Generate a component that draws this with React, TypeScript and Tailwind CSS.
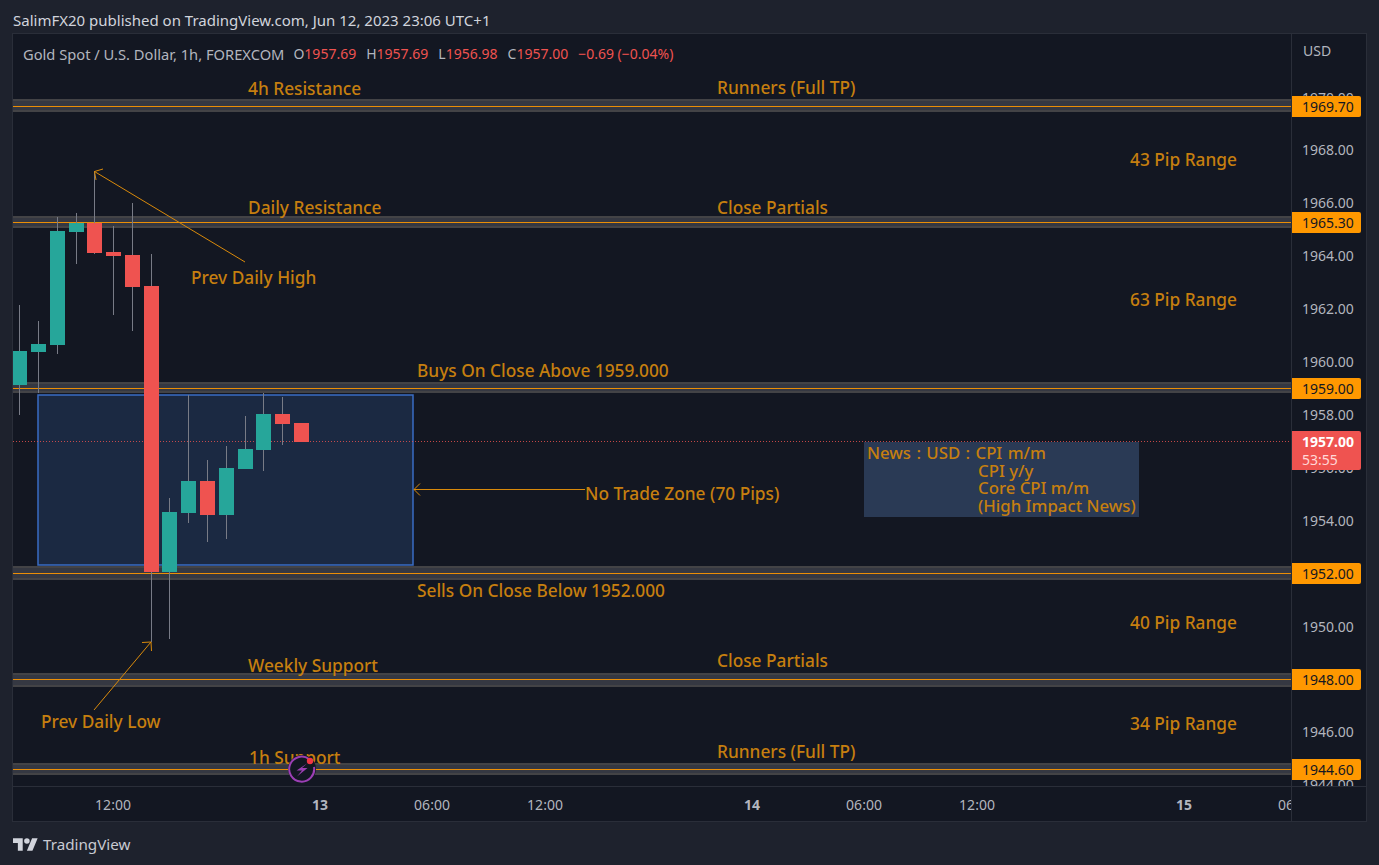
const font = "font-['Noto_Sans','Liberation_Sans',sans-serif]";

// [bodyLeft, bodyTop, bodyBottom, wickTop, wickBottom, up]
const candles: [number, number, number, number, number, boolean][] = [
  [12, 351, 385, 305, 415, true],
  [31, 344, 352, 321, 393, true],
  [50, 231, 345, 217, 354, true],
  [69, 223, 232, 213, 264, true],
  [87, 223, 253, 171, 254, false],
  [106, 252, 256, 226, 315, false],
  [125, 255, 287, 203, 331, false],
  [144, 286, 572, 254, 642, false],
  [162, 512, 572, 498, 639, true],
  [181, 481, 513, 395, 523, true],
  [200, 481, 515, 460, 542, false],
  [219, 468, 515, 446, 539, true],
  [238, 449, 469, 416, 469, true],
  [256, 414, 450, 393, 471, true],
  [275, 414, 424, 397, 445, false],
  [294, 423, 442, 423, 442, false],
];

const bands: [number, number, number][] = [
  [99, 112, 106],
  [216, 228, 222],
  [382, 393, 388],
  [566, 580, 573],
  [673, 687, 679],
  [763, 775, 769],
];

const labels = [
  { text: "4h Resistance", pos: "left-[235px] top-[44px]" },
  { text: "Runners (Full TP)", pos: "left-[704px] top-[43px]" },
  { text: "Daily Resistance", pos: "left-[235px] top-[163px]" },
  { text: "Close Partials", pos: "left-[704px] top-[163px]" },
  { text: "Prev Daily High", pos: "left-[178px] top-[233px]" },
  { text: "Buys On Close Above 1959.000", pos: "left-[404px] top-[326px]" },
  { text: "No Trade Zone (70 Pips)", pos: "left-[572px] top-[449px]" },
  { text: "Sells On Close Below 1952.000", pos: "left-[404px] top-[546px]" },
  { text: "Weekly Support", pos: "left-[235px] top-[621px]" },
  { text: "Close Partials", pos: "left-[704px] top-[616px]" },
  { text: "Prev Daily Low", pos: "left-[28px] top-[677px]" },
  { text: "1h Support", pos: "left-[236px] top-[713px]" },
  { text: "Runners (Full TP)", pos: "left-[704px] top-[707px]" },
  { text: "43 Pip Range", pos: "left-[1117px] top-[115px]" },
  { text: "63 Pip Range", pos: "left-[1117px] top-[255px]" },
  { text: "40 Pip Range", pos: "left-[1117px] top-[578px]" },
  { text: "34 Pip Range", pos: "left-[1117px] top-[679px]" },
];

const priceTicks = [
  { text: "1970.00", pos: "top-[54px]" },
  { text: "1968.00", pos: "top-[106px]" },
  { text: "1966.00", pos: "top-[159px]" },
  { text: "1964.00", pos: "top-[212px]" },
  { text: "1962.00", pos: "top-[265px]" },
  { text: "1960.00", pos: "top-[318px]" },
  { text: "1958.00", pos: "top-[371px]" },
  { text: "1956.00", pos: "top-[424px]" },
  { text: "1954.00", pos: "top-[477px]" },
  { text: "1950.00", pos: "top-[583px]" },
  { text: "1946.00", pos: "top-[688px]" },
  { text: "1944.00", pos: "top-[741px]" },
];

const priceTags = [
  { text: "1969.70", pos: "top-[62px]" },
  { text: "1965.30", pos: "top-[178px]" },
  { text: "1959.00", pos: "top-[344px]" },
  { text: "1952.00", pos: "top-[529px]" },
  { text: "1948.00", pos: "top-[635px]" },
  { text: "1944.60", pos: "top-[725px]" },
];

const timeTicks = [
  { text: "12:00", pos: "left-[86px] w-[28px]", bold: false },
  { text: "13", pos: "left-[293px] w-[28px]", bold: true },
  { text: "06:00", pos: "left-[405px] w-[28px]", bold: false },
  { text: "12:00", pos: "left-[518px] w-[28px]", bold: false },
  { text: "14", pos: "left-[725px] w-[28px]", bold: true },
  { text: "06:00", pos: "left-[837px] w-[28px]", bold: false },
  { text: "12:00", pos: "left-[950px] w-[28px]", bold: false },
  { text: "15", pos: "left-[1157px] w-[28px]", bold: true },
  { text: "06:00", pos: "left-[1269px] w-[28px]", bold: false },
];

const ChartDrawing = () => (
  <svg className="absolute inset-0" width="1278" height="752" viewBox="13 34 1278 752">
    {/* no trade zone */}
    <rect x="38" y="395" width="375" height="170" fill="#1b2942" stroke="#3a6cc4" strokeWidth="1.500" />
    {/* last price line */}
    <line x1="13" x2="1291" y1="441.5" y2="441.5" stroke="#ef5350" strokeDasharray="1 2" opacity="0.8" />
    {/* s/r bands */}
    {bands.map(([top, bottom, line]) => (
      <g key={top}>
        <rect x="13" y={top} width="1278" height={bottom - top} fill="#353842" />
        <rect x="13" y={top} width="1278" height="2" fill="#434346" />
        <rect x="13" y={bottom - 2} width="1278" height="2" fill="#434346" />
        <rect x="13" y={line} width="1278" height="1" fill="#ff9800" opacity="0.9" />
      </g>
    ))}
    {candles.map(([left, top, bottom, wickTop, wickBottom, up]) => (
      <g key={left}>
        <rect x={left + 7} y={wickTop} width="1" height={wickBottom - wickTop} fill="#787b86" />
        <rect x={left} y={top} width="15" height={bottom - top} fill={up ? "#26a69a" : "#ef5350"} />
      </g>
    ))}
    {/* arrows */}
    <g stroke="#d98a0b" strokeWidth="1" fill="none">
      <path d="M245 262 L94.5 171.5 M94.5 171.5 L103 169 M94.5 171.5 L96 180" />
      <path d="M94 710 L151 642 M151 642 L142 642.5 M151 642 L151.5 651" />
      <path d="M585 489.5 L414 489.5 M414 489.5 L420 483.5 M414 489.5 L420 495.5" />
    </g>
  </svg>
);

const SnapIcon = () => (
  <svg className="absolute left-[275px] top-[721px]" width="28" height="28" viewBox="0 0 28 28">
    <circle cx="14" cy="14" r="14" fill="#131722" />
    <path d="M21 4 A12.500 12.500 0 1 0 26 12" fill="none" stroke="#9c3fb5" strokeWidth="2" />
    <path d="M19 8.500 L8.500 15.500 H14 L9 21.500 L19.500 13 H14 Z" fill="#9c3fb5" />
    <circle cx="22" cy="6" r="3.200" fill="#f23645" />
  </svg>
);

const TvLogo = () => (
  <svg width="25" height="13" viewBox="0 4 36 18" fill="#d1d4dc">
    <path d="M14 22H7V11H0V4h14v18zM28 22h-8l7.500-18h8L28 22z" />
    <circle cx="20" cy="8" r="4" />
  </svg>
);

export default function App() {
  return (
    <div className={`${font} w-[1379px] h-[865px] bg-[#1e222d] flex flex-col overflow-hidden text-[#b2b5be]`}>
      <div className="h-[33px] pl-[13px] pt-[11px] text-[15px] leading-[18px] text-[#d1d4dc]">
        SalimFX20 published on TradingView.com, Jun 12, 2023 23:06 UTC+1
      </div>

      <div className="ml-[12px] w-[1355px] h-[789px] border border-[#2a2e39] bg-[#131722] flex flex-col">
        <div className="flex h-[752px]">
          <div className="relative w-[1278px] overflow-hidden">
            <ChartDrawing />
            <div className="absolute left-[10px] top-[10px] text-[14px] leading-[20px] whitespace-nowrap flex gap-[9px]">
              <span className="text-[14.700px] text-[#b2b5be]">Gold Spot / U.S. Dollar, 1h, FOREXCOM</span>
              <span className="flex gap-[10px] text-[#ef5350]">
                <span><span className="text-[#b2b5be]">O</span>1957.69</span>
                <span><span className="text-[#b2b5be]">H</span>1957.69</span>
                <span><span className="text-[#b2b5be]">L</span>1956.98</span>
                <span><span className="text-[#b2b5be]">C</span>1957.00</span>
                <span>−0.69 (−0.04%)</span>
              </span>
            </div>
            {labels.map((l) => (
              <span key={l.pos} className={`absolute ${l.pos} text-[17.300px] leading-[22px] font-medium whitespace-nowrap text-[#c67f0f]`}>
                {l.text}
              </span>
            ))}
            <div className="absolute left-[851px] top-[408px] w-[275px] h-[75px] bg-[#2a3a55] text-[16.800px] leading-[17.500px] font-medium text-[#c67f0f] pl-[3px] pt-[2px] whitespace-nowrap">
              <div className="[word-spacing:1px]">News : USD : CPI m/m</div>
              <div className="pl-[111px]">CPI y/y</div>
              <div className="pl-[111px]">Core CPI m/m</div>
              <div className="pl-[111px]">(High Impact News)</div>
            </div>
            <SnapIcon />
          </div>

          <div className="relative flex-1 border-l border-[#2a2e39] overflow-hidden text-[14px]">
            <div className="absolute left-[11px] top-[7px] leading-[20px]">USD</div>
            {priceTicks.map((t) => (
              <div key={t.text} className={`absolute left-[10px] ${t.pos} leading-[20px]`}>{t.text}</div>
            ))}
            {priceTags.map((t) => (
              <div key={t.text} className={`absolute left-[-1px] ${t.pos} w-[70px] h-[21px] bg-[#ff9800] rounded-r-[2px] text-[#131722] leading-[21px] pl-[11px]`}>
                {t.text}
              </div>
            ))}
            <div className="absolute left-[-1px] top-[397px] w-[70px] h-[39px] bg-[#ef5350] rounded-r-[2px] pl-[11px] pt-[2px]">
              <div className="leading-[18px] font-bold text-white">1957.00</div>
              <div className="leading-[18px] text-[#ffd9d8]">53:55</div>
            </div>
          </div>
        </div>

        <div className="flex flex-1 border-t border-[#2a2e39]">
          <div className="relative w-[1278px] overflow-hidden text-[14px]">
            {timeTicks.map((t) => (
              <div key={t.pos} className={`absolute ${t.pos} top-[8px] leading-[20px] flex justify-center whitespace-nowrap ${t.bold ? "font-bold" : ""}`}>
                {t.text}
              </div>
            ))}
          </div>
          <div className="flex-1 border-l border-[#2a2e39]" />
        </div>
      </div>

      <div className="flex items-center gap-[5px] pl-[13px] pt-[12px] text-[15.200px] leading-[20px] text-[#c8cad2]">
        <TvLogo />
        <span>TradingView</span>
      </div>
    </div>
  );
}
